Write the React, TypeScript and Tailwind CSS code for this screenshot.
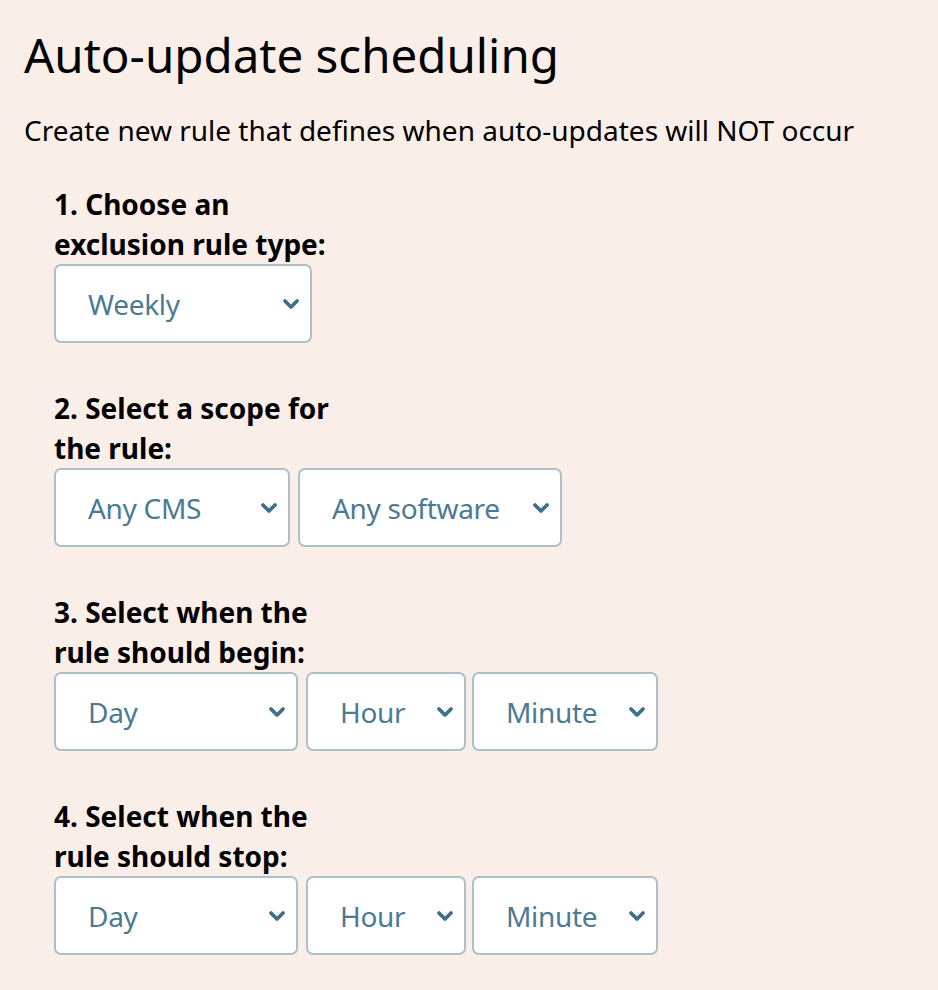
const font = { fontFamily: '"Noto Sans", "Open Sans", sans-serif' };

interface SelectBoxProps {
  label: string;
  width: string;
}

function SelectBox({ label, width }: SelectBoxProps) {
  return (
    <div
      className={`flex h-[79px] shrink-0 items-center justify-between rounded-[7px] border-2 border-[#adc0ca] bg-white pl-[32px] pr-[10px] ${width}`}
    >
      <span className="text-[28px] tracking-[-0.3px] text-[#4a7a94]">{label}</span>
      <svg width="18" height="12" viewBox="0 0 18 12">
        <path d="M3 3 L9 9 L15 3" fill="none" stroke="#3f6f89" strokeWidth="3.8" strokeLinecap="round" strokeLinejoin="round" />
      </svg>
    </div>
  );
}

interface StepProps {
  lines: [string, string];
  children: React.ReactNode;
}

function Step({ lines, children }: StepProps) {
  return (
    <div className="mb-[45px]">
      <h3 className="text-[28px] font-bold leading-[40px] text-black">
        {lines[0]}
        <br />
        {lines[1]}
      </h3>
      <div className="flex gap-[8px]">{children}</div>
    </div>
  );
}

export default function App() {
  return (
    <div className="min-h-screen bg-[#f9eee8] pl-[24px] pt-[25px]" style={font}>
      <h1 className="text-[47.5px] leading-[60px] text-black">Auto-update scheduling</h1>
      <p className="mt-[25px] text-[28px] leading-[40px] text-black">
        Create new rule that defines when auto-updates will NOT occur
      </p>

      <div className="ml-[30px] mt-[34px]">
        <Step lines={['1. Choose an', 'exclusion rule type:']}>
          <SelectBox label="Weekly" width="w-[258px]" />
        </Step>

        <Step lines={['2. Select a scope for', 'the rule:']}>
          <SelectBox label="Any CMS" width="w-[236px]" />
          <SelectBox label="Any software" width="w-[264px]" />
        </Step>

        <Step lines={['3. Select when the', 'rule should begin:']}>
          <SelectBox label="Day" width="w-[244px]" />
          <SelectBox label="Hour" width="w-[160px]" />
          <div className="-ml-[2px]">
            <SelectBox label="Minute" width="w-[186px]" />
          </div>
        </Step>

        <Step lines={['4. Select when the', 'rule should stop:']}>
          <SelectBox label="Day" width="w-[244px]" />
          <SelectBox label="Hour" width="w-[160px]" />
          <div className="-ml-[2px]">
            <SelectBox label="Minute" width="w-[186px]" />
          </div>
        </Step>
      </div>
    </div>
  );
}
